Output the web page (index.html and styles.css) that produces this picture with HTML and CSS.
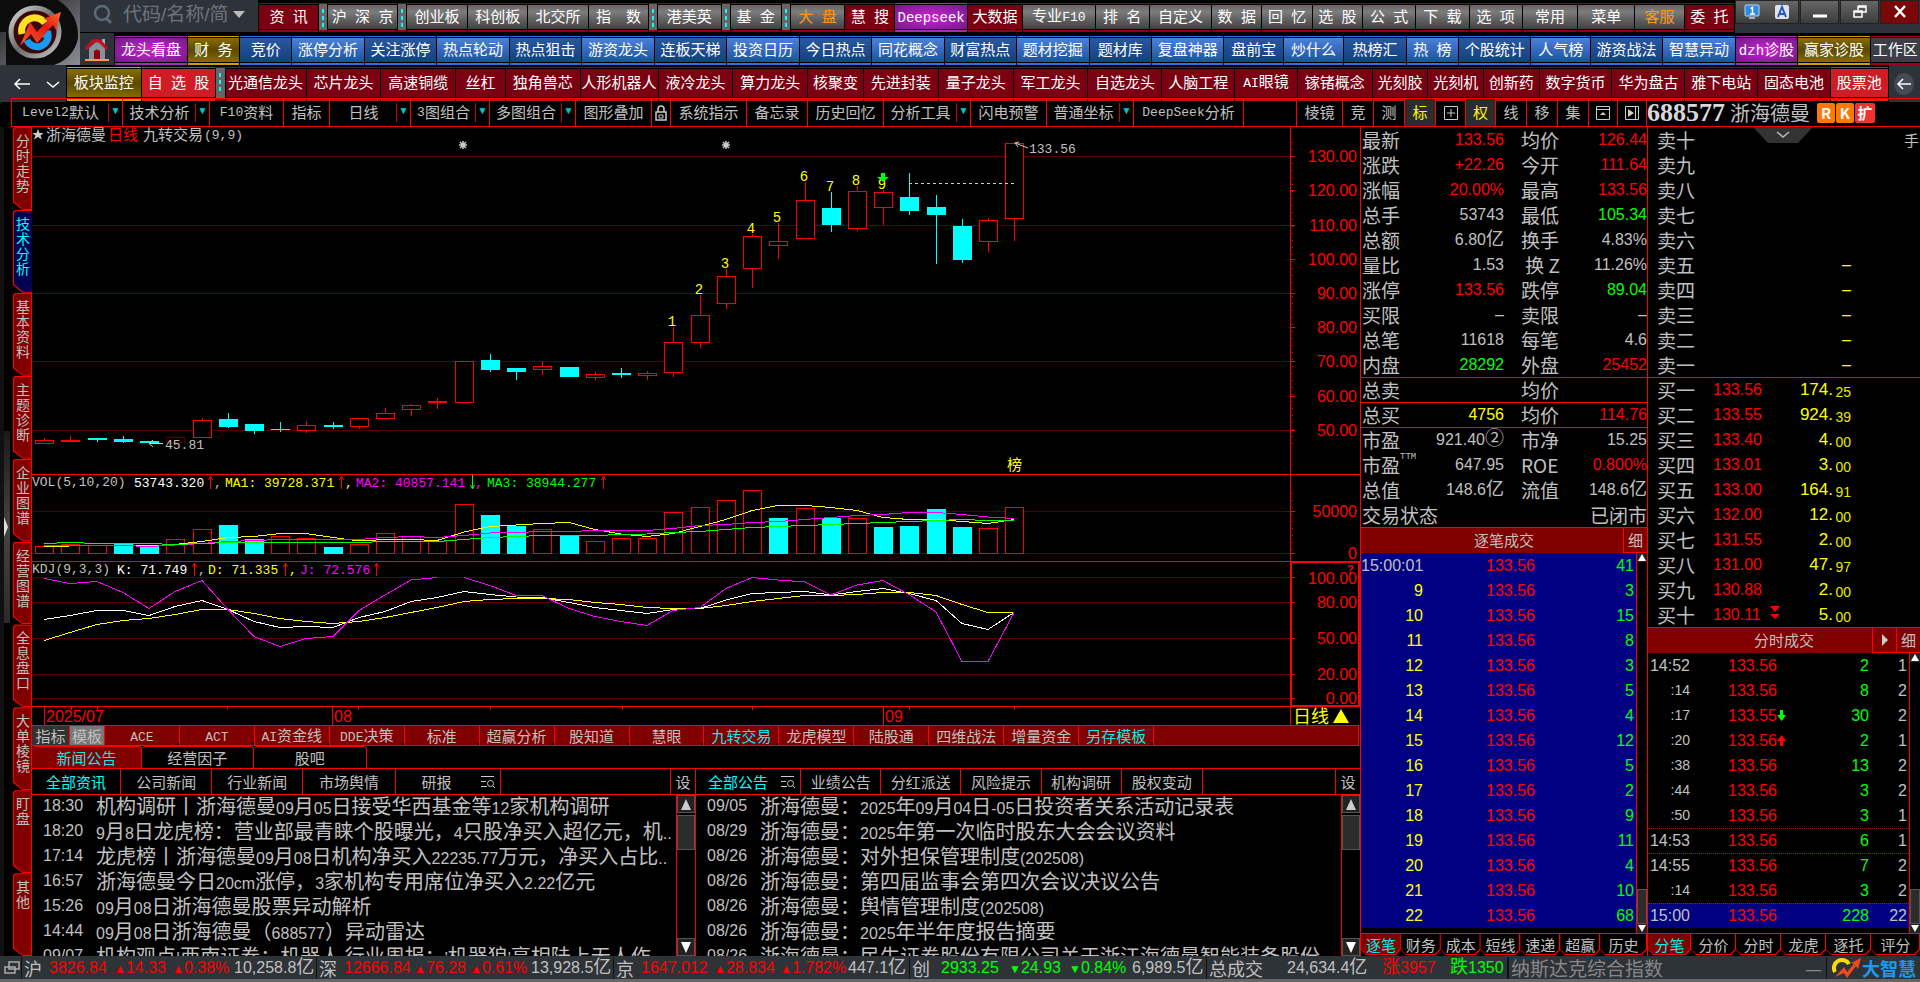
FILE: index.html
```html
<!DOCTYPE html>
<html lang="zh-CN">
<head>
<meta charset="utf-8">
<title>浙海德曼 688577</title>
<link rel="stylesheet" href="styles.css">
</head>
<body>
<header class="top">
  <div class="logo">
    <svg viewBox="0 0 80 65" width="80" height="65" aria-label="logo">
      <defs>
        <linearGradient id="ring" x1="0" y1="0" x2="1" y2="1"><stop offset="0" stop-color="#d8d8d8"/><stop offset=".5" stop-color="#6a6a6a"/><stop offset="1" stop-color="#c4c4c4"/></linearGradient>
        <linearGradient id="corner" x1="0" y1="0" x2="1" y2="1"><stop offset="0" stop-color="#1c1c1c"/><stop offset="1" stop-color="#8a8d94"/></linearGradient>
        <linearGradient id="bolt" x1="0" y1="1" x2="1" y2="0"><stop offset="0" stop-color="#ff5a30"/><stop offset=".6" stop-color="#e01c10"/><stop offset="1" stop-color="#ff6a30"/></linearGradient>
      </defs>
      <rect width="80" height="65" fill="url(#corner)"/>
      <path d="M0 0H58Q79 14 78 38Q74 58 54 65H6V32H0Z" fill="#0c0c0c"/>
      <circle cx="35" cy="32" r="24" fill="#3a0808" stroke="url(#ring)" stroke-width="5"/>
      <path d="M22 34A13 13 0 0 1 45 23" fill="none" stroke="#ffe020" stroke-width="7"/>
      <path d="M27 40A11 11 0 0 0 48 34H40" fill="none" stroke="#1a9af0" stroke-width="7"/>
      <path d="M20 46L30 22L37 32L48 20L43 19L61 12L56 30L53 25L37 43L31 34Z" fill="url(#bolt)"/>
    </svg>
  </div>
  <div class="row row1">
    <label class="search">
      <svg viewBox="0 0 20 20" width="20" height="20"><circle cx="9" cy="8" r="7" fill="none" stroke="#5b6b7c" stroke-width="2.500"/><path d="M13 13L18 18" stroke="#5b6b7c" stroke-width="3"/></svg>
      <input type="text" placeholder="代码/名称/简" aria-label="代码/名称/简">
      <span class="caret"></span>
    </label>
    <nav class="btns nav1">
      <button class="b wine">资  讯</button><i class="grip"></i>
      <button class="b gray">沪  深  京</button><i class="grip"></i>
      <button class="b gray">创业板</button><button class="b gray">科创板</button><button class="b gray">北交所</button><button class="b gray">指　数</button><i class="grip"></i>
      <button class="b gray">港美英</button><i class="grip"></i>
      <button class="b gray">基  金</button><i class="grip"></i>
      <button class="b gray orange">大  盘</button><button class="b wine">慧  搜</button><button class="b purple"><span class="m">Deepseek</span></button><button class="b wine">大数据</button>
      <button class="b gray">专业<span class="m">F10</span></button><button class="b gray">排  名</button><button class="b gray">自定义</button><button class="b gray">数  据</button><button class="b gray">回  忆</button><button class="b gray">选  股</button><button class="b gray">公  式</button><button class="b gray">下  载</button><button class="b gray">选  项</button><button class="b gray">常用</button><button class="b gray">菜单</button><button class="b gray orange">客服</button><button class="b wine">委  托</button>
    </nav>
    <div class="win">
      <span class="w wide">
        <svg viewBox="0 0 16 16" width="16" height="16"><rect x="1" y="1" width="14" height="11" rx="1" fill="#2b8be0" stroke="#b8d8f4"/><path d="M6.500 4.500L8.500 3.500V10M6 10H11" fill="none" stroke="#fff" stroke-width="1.500"/><rect x="5" y="13" width="6" height="2" fill="#aac"/></svg>
        <svg viewBox="0 0 16 16" width="16" height="16"><rect x="1" y="1" width="14" height="14" rx="2" fill="#dde3ea"/><path d="M4 13L8 3L12 13M5 10H11" fill="none" stroke="#2458c0" stroke-width="2"/></svg>
      </span>
      <button class="w" aria-label="最小化"><svg viewBox="0 0 16 16" width="16" height="16"><path d="M1 12H15" stroke="#fff" stroke-width="3"/></svg></button>
      <button class="w" aria-label="还原"><svg viewBox="0 0 16 16" width="16" height="16"><path d="M6 2H14V8H10M6 2V6M6 3H14M2 7H10V13H2ZM2 8H10" fill="none" stroke="#fff" stroke-width="1.500"/></svg></button>
      <button class="w close" aria-label="关闭"><svg viewBox="0 0 16 16" width="16" height="16"><path d="M3 2L13 13M13 2L3 13" stroke="#fff" stroke-width="2.500"/></svg></button>
    </div>
  </div>
  <nav class="row btns nav2">
    <button class="home" aria-label="首页"><svg viewBox="0 0 24 24" width="24" height="24"><path d="M4 11L12 4L20 11V22H4Z" fill="#8a9098"/><path d="M17 2H20V8L17 6Z" fill="#aab0b8"/><path d="M1 12L8 4H15L22 12" fill="none" stroke="#c81020" stroke-width="3"/><path d="M9 22V14Q12 11 15 14V22Z" fill="#900010"/><path d="M0 22H24V24H0Z" fill="#ff9a50"/></svg></button>
    <button class="b purple">龙头看盘</button><button class="b gold">财  务</button><button class="b navy">竞价</button><button class="b blue">涨停分析</button><button class="b navy">关注涨停</button><button class="b blue">热点轮动</button><button class="b navy">热点狙击</button><button class="b blue">游资龙头</button><button class="b navy">连板天梯</button><button class="b blue">投资日历</button><button class="b navy">今日热点</button><button class="b blue">同花概念</button><button class="b navy">财富热点</button><button class="b blue">题材挖掘</button><button class="b navy">题材库</button><button class="b blue">复盘神器</button><button class="b navy">盘前宝</button><button class="b blue">炒什么</button><button class="b navy">热榜汇</button><button class="b blue">热  榜</button><button class="b navy">个股统计</button><button class="b blue">人气榜</button><button class="b navy">游资战法</button><button class="b blue">智慧异动</button><button class="b purple"><span class="m">dzh</span>诊股</button><button class="b gold">赢家诊股</button><button class="b slate">工作区</button>
  </nav>
  <nav class="row btns nav3">
    <span class="arrows"><svg viewBox="0 0 65 32" width="65" height="32"><path d="M30 19H15M20 14L15 19L20 24" fill="none" stroke="#fff" stroke-width="1.500"/><path d="M47 17L53 22L59 17" fill="none" stroke="#fff" stroke-width="1.500"/></svg></span>
    <button class="b gold">板块监控</button><button class="b red">自  选  股</button><i class="grip"></i>
    <button class="b wine">光通信龙头</button><button class="b wine">芯片龙头</button><button class="b wine">高速铜缆</button><button class="b wine">丝杠</button><button class="b wine">独角兽芯</button><button class="b wine">人形机器人</button><button class="b wine">液冷龙头</button><button class="b wine">算力龙头</button><button class="b wine">核聚变</button><button class="b wine">先进封装</button><button class="b wine">量子龙头</button><button class="b wine">军工龙头</button><button class="b wine">自选龙头</button><button class="b wine">人脑工程</button><button class="b wine"><span class="m">AI</span>眼镜</button><button class="b wine">镓锗概念</button><button class="b wine">光刻胶</button><button class="b wine">光刻机</button><button class="b wine">创新药</button><button class="b wine">数字货币</button><button class="b wine">华为盘古</button><button class="b wine">雅下电站</button><button class="b wine">固态电池</button><button class="b red">股票池</button>
    <button class="back" aria-label="返回"><svg viewBox="0 0 20 24" width="20" height="24"><ellipse cx="10" cy="12" rx="10" ry="11" fill="#454b54"/><path d="M17 12H4M9 7L4 12L9 17" fill="none" stroke="#fff" stroke-width="1.500"/></svg></button>
  </nav>
</header>

<div class="tools">
  <button class="dd"><span class="m">Level2</span>默认</button><button class="dd">技术分析</button><button><span class="m">F10</span>资料</button><button>指标</button><button class="dd">日线</button><button class="dd"><span class="m">3</span>图组合</button><button class="dd">多图组合</button><button>图形叠加</button>
  <button aria-label="锁定"><svg viewBox="0 0 14 16" width="14" height="16"><path d="M4 7V4Q4 1 7 1Q10 1 10 4V7" fill="none" stroke="#ccc" stroke-width="1.500"/><rect x="2" y="7" width="10" height="8" fill="none" stroke="#ccc" stroke-width="1.500"/><path d="M5 10H9V13H5Z" stroke="#ccc" fill="none"/></svg></button>
  <button>系统指示</button><button>备忘录</button><button>历史回忆</button><button class="dd">分析工具</button><button>闪电预警</button><button class="dd">普通坐标</button><button><span class="m">DeepSeek</span>分析</button><span></span>
  <button>棱镜</button><button>竞</button><button>测</button><button class="on">标</button><button aria-label="网格"><svg viewBox="0 0 14 14" width="14" height="14"><path d="M.5.5H13.500V13.500H.5ZM3 7H11M7 3V11" fill="none" stroke="#ccc"/></svg></button><button class="on">权</button><button>线</button><button>移</button><button>集</button>
  <button aria-label="弹出"><svg viewBox="0 0 14 14" width="14" height="14"><path d="M.5.5H13.500V13.500H.5ZM.5 3.500H13.500" fill="none" stroke="#ccc"/><path d="M4 9L7 6L10 9Z" fill="#ccc"/></svg></button>
  <button aria-label="下一个"><svg viewBox="0 0 14 14" width="14" height="14"><path d="M.5.5H13.500V13.500H.5ZM10.500 .5V13.500" fill="none" stroke="#ccc"/><path d="M3 3L9 7L3 11Z" fill="#ccc"/></svg></button>
  <h1 class="stock"><b>688577</b><span>浙海德曼</span><em>R</em><em>K</em><em class="kuo">扩</em></h1>
</div>

<main class="main">
  <aside class="side">
    <div class="rail"><span class="handle"></span></div>
    <nav class="vtabs">
      <button>分时走势</button><button class="on">技术分析</button><button>基本资料</button><button>主题诊断</button><button>企业图谱</button><button>经营图谱</button><button>全息盘口</button><button>大单棱镜</button><button>盯盘</button><button>其他</button>
    </nav>
  </aside>

  <section class="center">
    <svg id="chart" class="chart" viewBox="32 127 1328 598" role="img" aria-label="日线 K线图">
      <g class="grid">
        <path d="M32 156.500H1290M32 225.500H1290M32 293.500H1290M32 361.500H1290M32 430.500H1290M32 511.500H1290M32 553.500H1290M32 577.500H1290M32 602.500H1290M32 638.500H1290M32 674.500H1290M32 698.500H1290"/>
      </g>
      <g id="plot"></g>
      <g class="frame">
        <path d="M32 474.500H1360M32 561.500H1360M32 706.500H1360M1290.500 127V726"/>
        <rect x="1291" y="562" width="68" height="144"/>
        <path d="M44.500 706V726M71.500 706V710M97.500 706V710M227.500 706V710M332.500 706V726M358.500 706V710M490.500 706V710M622.500 706V710M752.500 706V710M883.500 706V726M909.500 706V710M1014.500 706V710"/>
        <path stroke-dasharray="1 6" d="M1292.500 142V446M1292.500 493V554"/>
        <path d="M1291 156.500h4M1291 190.500h4M1291 225.500h4M1291 259.500h4M1291 293.500h4M1291 327.500h4M1291 361.500h4M1291 396.500h4M1291 430.500h4M1291 511.500h4M1291 553.500h4M1291 577.500h4M1291 602.500h4M1291 638.500h4M1291 674.500h4M1291 698.500h4"/>
      </g>
      <g class="axis">
        <text x="1357" y="162">130.00</text><text x="1357" y="196">120.00</text><text x="1357" y="231">110.00</text><text x="1357" y="265">100.00</text><text x="1357" y="299">90.00</text><text x="1357" y="333">80.00</text><text x="1357" y="367">70.00</text><text x="1357" y="402">60.00</text><text x="1357" y="436">50.00</text>
        <text x="1357" y="517">50000</text><text x="1357" y="559">0</text>
        <text x="1357" y="584">100.00</text><text x="1357" y="608">80.00</text><text x="1357" y="644">50.00</text><text x="1357" y="680">20.00</text><text x="1357" y="704">0.00</text>
      </g>
      <text class="help" x="1347" y="573">?</text>
      <g class="dates"><text x="46" y="722">2025/07</text><text x="334" y="722">08</text><text x="885" y="722">09</text></g>
      <text class="period" x="1293" y="723">日线</text><path d="M1333 723L1341 709L1349 723Z" fill="#ff0"/>
      <g class="cap">
        <text x="46" y="140">浙海德曼</text><text class="r" x="108" y="140">日线</text><text x="143" y="140">九转交易</text><text class="m" x="204" y="139">(9,9)</text>
        <path fill="#ccc" d="M38 129l1.500 4h4l-3 2.500 1.500 4-4-2.500-4 2.500 1.500-4-3-2.500h4z"/>
        <g class="m">
          <text x="32" y="486">VOL(5,10,20)</text><text class="w" x="134" y="487">53743.320</text><text x="214" y="487">,</text><text class="y" x="225" y="487">MA1: 39728.371</text><text class="y" x="345" y="487">,</text><text class="p" x="356" y="487">MA2: 40857.141</text><text class="p" x="475" y="487">,</text><text class="g" x="487" y="487">MA3: 38944.277</text>
          <text x="32" y="573">KDJ(9,3,3)</text><text class="w" x="117" y="574">K: 71.749</text><text x="198" y="574">,</text><text class="y" x="208" y="574">D: 71.335</text><text class="y" x="289" y="574">,</text><text class="p" x="300" y="574">J: 72.576</text>
          <text x="165" y="449">45.81</text><text x="1029" y="153">133.56</text>
        </g>
        <path class="up" d="M210.500 489V477M208.500 480L210.500 476L212.500 480M341.500 489V477M339.500 480L341.500 476L343.500 480M603.500 489V477M601.500 480L603.500 476L605.500 480M194.500 576V564M192.500 567L194.500 563L196.500 567M285.500 576V564M283.500 567L285.500 563L287.500 567M376.500 576V564M374.500 567L376.500 563L378.500 567"/>
        <path class="down" d="M472.500 475V488M470.500 485L472.500 489L474.500 485"/>
        <path class="ptr" d="M163 443.500H149M153 440L149 443.500L153 447M1028 148L1015 143M1019 142L1015 143L1018 147"/>
        <text class="y" x="1007" y="470">榜</text>
      </g>
    </svg>
    <nav class="tmpl">
      <button class="dark">指标</button><button class="lite">模板</button><button><span class="m">ACE</span></button><button><span class="m">ACT</span></button><button><span class="m">AI</span>资金线</button><button><span class="m">DDE</span>决策</button><button>标准</button><button>超赢分析</button><button>股知道</button><button>慧眼</button><button class="cy">九转交易</button><button>龙虎模型</button><button>陆股通</button><button>四维战法</button><button>增量资金</button><button class="cy">另存模板</button>
    </nav>
    <nav class="ntabs"><button class="on">新闻公告</button><button>经营因子</button><button>股吧</button></nav>
    <div class="news">
      <section class="pane left">
        <nav class="sub"><button class="cy">全部资讯</button><button>公司新闻</button><button>行业新闻</button><button>市场舆情</button><button class="lst">研报<svg viewBox="0 0 14 14" width="14" height="14"><path d="M0 1.500H13M0 6.500H5M0 11.500H6M12 11L14 13" stroke="#ccc" fill="none"/><circle cx="9.500" cy="8.500" r="3" fill="none" stroke="#ccc"/></svg></button><span></span><button class="set">设</button></nav>
        <div class="body">
          <ul>
            <li><time>18:30</time><a href="#">机构调研丨浙海德曼<i>09</i>月<i>05</i>日接受华西基金等<i>12</i>家机构调研</a></li>
            <li><time>18:20</time><a href="#"><i>9</i>月<i>8</i>日龙虎榜：营业部最青睐个股曝光，<i>4</i>只股净买入超亿元，机<i>..</i></a></li>
            <li><time>17:14</time><a href="#">龙虎榜丨浙海德曼<i>09</i>月<i>08</i>日机构净买入<i>22235.77</i>万元，净买入占比<i>..</i></a></li>
            <li><time>16:57</time><a href="#">浙海德曼今日<i>20cm</i>涨停，<i>3</i>家机构专用席位净买入<i>2.22</i>亿元</a></li>
            <li><time>15:26</time><a href="#"><i>09</i>月<i>08</i>日浙海德曼股票异动解析</a></li>
            <li><time>14:44</time><a href="#"><i>09</i>月<i>08</i>日浙海德曼（<i>688577</i>）异动雷达</a></li>
            <li><time>09/07</time><a href="#">机构观点<i>|</i>西南证券：机器人 行业周报：<i>'</i>机器狼<i>'</i>亮相陆上无人作</a></li>
          </ul>
          <div class="sbar"><button class="au" aria-label="上"></button><span class="thumb"></span><button class="ad" aria-label="下"></button></div>
        </div>
      </section>
      <section class="pane right">
        <nav class="sub"><button class="cy lst">全部公告<svg viewBox="0 0 14 14" width="14" height="14"><path d="M0 1.500H13M0 6.500H5M0 11.500H6M12 11L14 13" stroke="#ccc" fill="none"/><circle cx="9.500" cy="8.500" r="3" fill="none" stroke="#ccc"/></svg></button><button>业绩公告</button><button>分红派送</button><button>风险提示</button><button>机构调研</button><button>股权变动</button><span></span><button class="set">设</button></nav>
        <div class="body">
          <ul>
            <li><time>09/05</time><a href="#">浙海德曼：<i>2025</i>年<i>09</i>月<i>04</i>日<i>-05</i>日投资者关系活动记录表</a></li>
            <li><time>08/29</time><a href="#">浙海德曼：<i>2025</i>年第一次临时股东大会会议资料</a></li>
            <li><time>08/26</time><a href="#">浙海德曼：对外担保管理制度<i>(202508)</i></a></li>
            <li><time>08/26</time><a href="#">浙海德曼：第四届监事会第四次会议决议公告</a></li>
            <li><time>08/26</time><a href="#">浙海德曼：舆情管理制度<i>(202508)</i></a></li>
            <li><time>08/26</time><a href="#">浙海德曼：<i>2025</i>年半年度报告摘要</a></li>
            <li><time>08/26</time><a href="#">浙海德曼：民生证券股份有限公司关于浙江海德曼智能装备股份</a></li>
          </ul>
          <div class="sbar"><button class="au" aria-label="上"></button><span class="thumb"></span><button class="ad" aria-label="下"></button></div>
        </div>
      </section>
    </div>
  </section>

  <section class="quote">
    <table class="kv">
      <tr><th>最新</th><td class="r">133.56</td><th>均价</th><td class="r">126.44</td></tr>
      <tr><th>涨跌</th><td class="r">+22.26</td><th>今开</th><td class="r">111.64</td></tr>
      <tr><th>涨幅</th><td class="r">20.00%</td><th>最高</th><td class="r">133.56</td></tr>
      <tr><th>总手</th><td>53743</td><th>最低</th><td class="g">105.34</td></tr>
      <tr><th>总额</th><td>6.80<u>亿</u></td><th>换手</th><td>4.83%</td></tr>
      <tr><th>量比</th><td>1.53</th><th>&nbsp;换 Z</th><td>11.26%</td></tr>
      <tr><th>涨停</th><td class="r">133.56</td><th>跌停</th><td class="g">89.04</td></tr>
      <tr><th>买限</th><td>–</td><th>卖限</th><td>–</td></tr>
      <tr><th>总笔</th><td>11618</td><th>每笔</th><td>4.6</td></tr>
      <tr><th>内盘</th><td class="g">28292</td><th>外盘</th><td class="r">25452</td></tr>
      <tr class="ln"><th>总卖</th><td></td><th>均价</th><td></td></tr>
      <tr class="ln"><th>总买</th><td class="y">4756</td><th>均价</th><td class="r">114.76</td></tr>
      <tr class="ln"><th>市盈</th><td>921.40<u class="big">②</u></td><th>市净</th><td>15.25</td></tr>
      <tr><th>市盈<sup>TTM</sup></th><td>647.95</td><th>ROE</th><td class="r">0.800%</td></tr>
      <tr><th>总值</th><td>148.6<u>亿</u></td><th>流值</th><td>148.6<u>亿</u></td></tr>
      <tr><th colspan="2">交易状态</th><td colspan="2" class="state">已闭市</td></tr>
    </table>
    <div class="bar one"><span>逐笔成交</span><button>细</button></div>
    <div class="ticks blueb">
      <table>
        <tr><td class="s">15:00:01</td><td class="r">133.56</td><td class="g">41</td></tr>
        <tr><td>9</td><td class="r">133.56</td><td class="g">3</td></tr>
        <tr><td>10</td><td class="r">133.56</td><td class="g">15</td></tr>
        <tr><td>11</td><td class="r">133.56</td><td class="g">8</td></tr>
        <tr><td>12</td><td class="r">133.56</td><td class="g">3</td></tr>
        <tr><td>13</td><td class="r">133.56</td><td class="g">5</td></tr>
        <tr><td>14</td><td class="r">133.56</td><td class="g">4</td></tr>
        <tr><td>15</td><td class="r">133.56</td><td class="g">12</td></tr>
        <tr><td>16</td><td class="r">133.56</td><td class="g">5</td></tr>
        <tr><td>17</td><td class="r">133.56</td><td class="g">2</td></tr>
        <tr><td>18</td><td class="r">133.56</td><td class="g">9</td></tr>
        <tr><td>19</td><td class="r">133.56</td><td class="g">11</td></tr>
        <tr><td>20</td><td class="r">133.56</td><td class="g">4</td></tr>
        <tr><td>21</td><td class="r">133.56</td><td class="g">10</td></tr>
        <tr><td>22</td><td class="r">133.56</td><td class="g">68</td></tr>
      </table>
      <div class="sbar thin low"><button class="au" aria-label="上"></button><span class="thumb"></span><button class="ad" aria-label="下"></button></div>
    </div>
    <nav class="btabs t7"><button class="on">逐笔</button><button>财务</button><button>成本</button><button>短线</button><button>速递</button><button>超赢</button><button>历史</button></nav>
  </section>

  <section class="depth">
    <button class="drop" aria-label="展开"><svg viewBox="0 0 60 16" width="60" height="16"><path d="M0 0H60L45 16H15Z" fill="#333"/><path d="M24 5L30 10L36 5" fill="none" stroke="#bbb" stroke-width="1.500"/></svg></button>
    <table class="lv">
      <tr><th>卖十</th><td></td><td></td><td class="hand">手</td></tr>
      <tr><th>卖九</th><td></td><td></td><td></td></tr>
      <tr><th>卖八</th><td></td><td></td><td></td></tr>
      <tr><th>卖七</th><td></td><td></td><td></td></tr>
      <tr><th>卖六</th><td></td><td></td><td></td></tr>
      <tr><th>卖五</th><td></td><td></td><td class="y">–</td></tr>
      <tr><th>卖四</th><td></td><td></td><td class="y">–</td></tr>
      <tr><th>卖三</th><td></td><td></td><td class="y">–</td></tr>
      <tr><th>卖二</th><td></td><td></td><td class="y">–</td></tr>
      <tr><th>卖一</th><td></td><td></td><td class="y">–</td></tr>
      <tr class="ln"><th>买一</th><td class="r">133.56</td><td class="v">174.</td><td class="d">25</td></tr>
      <tr><th>买二</th><td class="r">133.55</td><td class="v">924.</td><td class="d">39</td></tr>
      <tr><th>买三</th><td class="r">133.40</td><td class="v">4.</td><td class="d">00</td></tr>
      <tr><th>买四</th><td class="r">133.01</td><td class="v">3.</td><td class="d">00</td></tr>
      <tr><th>买五</th><td class="r">133.00</td><td class="v">164.</td><td class="d">91</td></tr>
      <tr><th>买六</th><td class="r">132.00</td><td class="v">12.</td><td class="d">00</td></tr>
      <tr><th>买七</th><td class="r">131.55</td><td class="v">2.</td><td class="d">00</td></tr>
      <tr><th>买八</th><td class="r">131.00</td><td class="v">47.</td><td class="d">97</td></tr>
      <tr><th>买九</th><td class="r">130.88</td><td class="v">2.</td><td class="d">00</td></tr>
      <tr><th>买十</th><td class="r">130.11&nbsp; <svg viewBox="0 0 10 14" width="10" height="14"><path d="M0 0H10L5 6ZM0 8H10L5 13Z" fill="#f00"/></svg></td><td class="v">5.</td><td class="d">00</td></tr>
    </table>
    <div class="bar two"><span>分时成交</span><button aria-label="播放"><svg viewBox="0 0 8 12" width="8" height="12"><path d="M1 0L7 6L1 12Z" fill="#ccc"/></svg></button><button>细</button></div>
    <div class="ticks">
      <table class="four">
        <tr><td class="s">14:52</td><td class="r">133.56</td><td class="g">2</td><td>1</td></tr>
        <tr><td class="q">:14</td><td class="r">133.56</td><td class="g">8</td><td>2</td></tr>
        <tr><td class="q">:17</td><td class="r">133.55<svg viewBox="0 0 9 11" width="9" height="11"><path d="M3 0H6V5H9L4.500 11L0 5H3Z" fill="#0f0"/></svg></td><td class="g">30</td><td>2</td></tr>
        <tr><td class="q">:20</td><td class="r">133.56<svg viewBox="0 0 9 11" width="9" height="11"><path d="M3 11H6V6H9L4.500 0L0 6H3Z" fill="#f00"/></svg></td><td class="g">2</td><td>1</td></tr>
        <tr><td class="q">:38</td><td class="r">133.56</td><td class="g">13</td><td>2</td></tr>
        <tr><td class="q">:44</td><td class="r">133.56</td><td class="g">3</td><td>2</td></tr>
        <tr><td class="q">:50</td><td class="r">133.56</td><td class="g">3</td><td>1</td></tr>
        <tr class="dot"><td class="s">14:53</td><td class="r">133.56</td><td class="g">6</td><td>1</td></tr>
        <tr class="dot"><td class="s">14:55</td><td class="r">133.56</td><td class="g">7</td><td>2</td></tr>
        <tr><td class="q">:14</td><td class="r">133.56</td><td class="g">3</td><td>2</td></tr>
        <tr class="dot sel"><td class="s">15:00</td><td class="r">133.56</td><td class="g">228</td><td>22</td></tr>
      </table>
      <div class="sbar thin low"><button class="au" aria-label="上"></button><span class="thumb"></span><button class="ad" aria-label="下"></button></div>
    </div>
    <nav class="btabs t6"><button class="on">分笔</button><button>分价</button><button>分时</button><button>龙虎</button><button>逐托</button><button>评分</button></nav>
  </section>
</main>

<footer class="status">
  <span class="ic"><svg viewBox="0 0 16 14" width="16" height="14"><path d="M5 1H15V8H5ZM1 6H11V12H1Z" fill="#2e3338" stroke="#aaa" stroke-width="1.500"/></svg></span>
  <span class="k">沪</span><span class="r">3826.84</span><span class="r"><s>▲</s>14.33</span><span class="r"><s>▲</s>0.38%</span><span>10,258.8<u>亿</u></span>
  <span class="k">深</span><span class="r">12666.84</span><span class="r"><s>▲</s>76.28</span><span class="r"><s>▲</s>0.61%</span><span>13,928.5<u>亿</u></span>
  <span class="k">京</span><span class="r">1647.012</span><span class="r"><s>▲</s>28.834</span><span class="r"><s>▲</s>1.782%</span><span>447.1<u>亿</u></span>
  <span class="k">创</span><span class="g">2933.25</span><span class="g"><s>▼</s>24.93</span><span class="g"><s>▼</s>0.84%</span><span>6,989.5<u>亿</u></span>
  <span class="k">总成交</span><span>24,634.4<u>亿</u></span><span class="r"><u>涨</u>3957</span><span class="g"><u>跌</u>1350</span>
  <span class="nas">纳斯达克综合指数<i>—</i></span>
  <span class="brand"><svg viewBox="0 0 30 22" width="30" height="22"><path d="M3 15A8 8 0 0 1 17 7" fill="none" stroke="#ffd800" stroke-width="4"/><path d="M3 20L12 10L15 15L22 7L19 6L29 1L26 12L24 9L15 21L12 16Z" fill="#f04a1c"/></svg>大智慧</span>
</footer>
<script src="chart.js"></script>
</body>
</html>
```

FILE: styles.css
```css
:root {
  --line: #f00;
  --text: #c0c0c0;
  --maroon: #800000;
  --cjk: "Noto Sans CJK SC", sans-serif;
  --num: "Liberation Sans", "Noto Sans CJK SC", sans-serif;
  --mono: "Liberation Mono", "Noto Sans CJK SC", monospace;
}
* { box-sizing: border-box; }
body {
  margin: 0;
  height: 100vh;
  display: flex;
  flex-direction: column;
  overflow: hidden;
  background: #000;
  color: var(--text);
  font: 15px/20px "Liberation Sans", "Noto Sans CJK SC", sans-serif;
}
button {
  margin: 0; padding: 0; border: 0;
  background: none; color: inherit; font: inherit;
  white-space: pre; overflow: hidden;
}
table { border-collapse: collapse; width: 100%; table-layout: fixed; }
td, th { padding: 0; font-weight: 400; }
svg { flex: none; }
u, s { text-decoration: none; font-size: 18px; }
s { font-size: 12px; line-height: 16px; }
u.big { font-size: 19px; }
.m { font-family: var(--mono); font-size: 13px; }
.r { color: #f00; } .g { color: #0f0; } .y { color: #ff0; } .cy { color: #0ff; }

/* header */
.top { display: grid; grid-template-columns: 80px minmax(0, 1fr); grid-template-rows: 33px 32px 33px; }
.logo { grid-row: 1 / 3; }
.logo svg { display: block; }
.row1 { display: flex; background: #000; }
.search {
  width: 178px; height: 32px; flex: none; display: flex; align-items: center; gap: 10px;
  padding: 0 8px 3px 13px; background: #2e3339;
}
.search input {
  width: 108px; border: 0; padding: 0; outline: 0; background: none; color: #999;
  font: 19px/26px "Liberation Sans", "Noto Sans CJK SC", sans-serif;
}
.search input::placeholder { color: #6f747c; }
.caret { margin-left: -8px; border: 6px solid transparent; border-top: 7px solid #bbb; border-bottom: 0; flex: none; }
.btns { display: grid; gap: 1px; min-width: 0; }
.nav1 {
  flex: 1; padding: 3px 1px 1px;
  grid-template-columns: 59fr 8fr 68fr 8fr 60fr 59fr 59fr 59fr 8fr 62fr 8fr 50fr 8fr 53fr 49fr 71fr 54fr 71fr 53fr 61fr 49fr 49fr 49fr 52fr 52fr 52fr 54fr 56fr 48fr 49fr;
}
.nav2 {
  padding: 3px 0 0;
  grid-template-columns: 34fr 71fr 51fr 51fr 71fr 71fr 71fr 71fr 71fr 71fr 71fr 71fr 71fr 71fr 71fr 61fr 71fr 58fr 59fr 61fr 51fr 71fr 58fr 71fr 71fr 61fr 71fr 49fr;
}
.nav3 {
  grid-column: 1 / 3; padding: 2px 0 1px;
  grid-template-columns: 65fr 73fr 73fr 8fr 79fr 73fr 73fr 48fr 73fr 76fr 73fr 73fr 54fr 73fr 73fr 73fr 72fr 71fr 61fr 73fr 54fr 54fr 54fr 71fr 71fr 71fr 71fr 56fr 31fr;
}
.b {
  padding: 1px 0; border-top: 1px solid #a00018; border-bottom: 2px solid #a00018;
  background-clip: content-box; background-color: #7a0012; color: #fff; min-width: 0;
}
.nav3 .b { padding-bottom: 2px; line-height: 18px; }
.wine { border-bottom-color: #c01020; }
.nav1 .b { border-color: #900018; }
.gray { background-image: linear-gradient(#606060, #7c7c7c 30%, #3c3c3c); background-clip: content-box; }
.purple, .nav1 .purple { border-color: #a030b0; background-image: radial-gradient(#d020d0, #a020b0 45%, #701a80); background-clip: content-box; }
.gold { border-color: #d0a000; background-image: linear-gradient(#8a7000, #5c4800 50%, #8a7000); background-clip: content-box; }
.blue { border-color: #2a74e0; background-image: linear-gradient(#4c84dc, #1c4f9c); background-clip: content-box; }
.navy { border-color: #2a74e0; background-image: linear-gradient(#28599f, #153f80); background-clip: content-box; }
.red { border-color: #e02020; background-color: #d01c24; }
.slate { border-color: #a00018; background-color: #3b4048; }
.orange { color: #ff9a10; }
.purple .m { font-size: 14px; }
.grip {
  background: repeating-linear-gradient(#0ff 0 4px, #666 4px 7px) 3px 5px / 2px 18px no-repeat, #666;
  border-top: 1px solid #900018; border-bottom: 2px solid #900018;
}
.home { background: #2e3339; display: grid; place-items: center; margin: -3px 0 0; }
.arrows { background: #2e3339; margin: -2px 0 -1px; }
.back { background: #2e3339; margin: -2px 0 -1px; display: grid; place-items: center; }
.win { width: 185px; flex: none; display: flex; gap: 1px; background: #2e3339; }
.w { width: 39px; height: 24px; display: flex; align-items: center; justify-content: center; background: linear-gradient(#666, #3c3c3c); border: 1px solid #222; }
.w.wide { width: 64px; gap: 14px; }
.w.close { background: #7a0808; }

/* toolbar */
.tools {
  display: grid; height: 29px; flex: none; margin-left: 11px;
  grid-template-columns: 111fr 87fr 74fr 46fr 81fr 79fr 86fr 76fr 19fr 76fr 61fr 76fr 87fr 76fr 87fr 110fr 53fr 46fr 31fr 31fr 31fr 30fr 30fr 31fr 31fr 31fr 29fr 29fr 273fr;
  border-top: 1px solid var(--line); border-bottom: 1px solid var(--line); border-left: 1px solid var(--line);
}
.tools > button, .tools > span { border-right: 1px solid var(--line); display: flex; align-items: center; justify-content: center; min-width: 0; }
.tools .dd { position: relative; padding-right: 13px; }
.tools .dd::after {
  content: "▼"; position: absolute; right: 0; top: 4px; width: 13px; height: 19px; color: #00c8c8;
  font-size: 10px; line-height: 15px; border-left: 1px solid #c00; text-align: center;
}
.tools .on { background: #2c2c2c; color: #ff0; }
.stock { margin: 0; display: flex; align-items: center; gap: 1px; font: 20px/26px "Noto Sans CJK SC", sans-serif; }
.stock b { font: bold 26px/26px "Liberation Serif", serif; color: #d8d8d8; }
.stock span { margin: 0 6px 0 4px; }
.stock em { width: 18px; height: 20px; border-radius: 2px; background: #ff7800; color: #fff; font: bold 15px/20px "Noto Sans CJK SC", sans-serif; text-align: center; }
.stock .kuo { width: 20px; background: #f53030; }

/* main columns */
.main { flex: 1; min-height: 0; display: grid; grid-template-columns: 32px minmax(0, 1fr) 287px 273px; grid-template-rows: minmax(0, 1fr); }
.side { display: flex; min-height: 0; }
.rail { width: 13px; background: linear-gradient(90deg, #111 4px, transparent 4px); padding: 304px 0 0 4px; }
.handle { display: grid; align-items: center; width: 6px; height: 192px; background: linear-gradient(#1a1a1a, #444 50%, #2a2a2a); }
.handle::before { content: ""; border: 10px solid transparent; border-left: 4px solid #ddd; border-right: 0; width: 4px; }
.vtabs { flex: 1; display: flex; flex-direction: column; min-height: 0; }
.vtabs button {
  flex: 1; min-height: 0; position: relative; z-index: 0; background: var(--line);
  clip-path: polygon(0 2px, 2px 0, 100% 0, 100% 100%, 50% 100%, 0 91%);
  font: 14px/15px var(--cjk); white-space: normal; padding: 6px 2px 0 3px; text-align: left; word-break: break-all;
  display: flex; align-items: flex-start;
}
.vtabs button::before {
  content: ""; position: absolute; z-index: -1; inset: 1px; background: var(--maroon);
  clip-path: polygon(0 2px, 2px 0, 100% 0, 100% 100%, 50% 100%, 0 91%);
}
.vtabs .on { color: #0ff; }
.vtabs .on::before { background: #000050; right: 0; }

/* chart */
.center { display: flex; flex-direction: column; min-width: 0; min-height: 0; }
.chart { display: block; width: 100%; height: auto; }
.grid path { stroke: #500000; fill: none; }
.frame path { stroke: #f00; fill: none; }
.frame rect { stroke: #f00; stroke-width: 2px; fill: none; }
.axis text { font: 16px var(--num); fill: #f00; text-anchor: end; }
.dates text { font: 16px var(--num); fill: #f00; }
.help { font: bold 11px "Liberation Sans", sans-serif; fill: #f00; }
.period { font: 18px var(--cjk); fill: #ff0; }
.cap text { font: 15px var(--cjk); fill: var(--text); }
.cap .m text, .cap text.m { font: 13px var(--mono); }
.cap text.r { fill: #f00; } .cap text.y { fill: #ff0; } .cap text.p { fill: #f0f; } .cap text.g { fill: #0f0; } .cap text.w { fill: #fff; }
.up { stroke: #f00; fill: none; } .down { stroke: #0f0; fill: none; } .ptr { stroke: #ccc; fill: none; }
.seq { font: 14px var(--mono); fill: #ff0; text-anchor: middle; }

.tmpl {
  display: grid; flex: none; height: 21px; margin-right: 1px; background: var(--maroon);
  border: 1px solid var(--line); border-left: 0;
  grid-template-columns: 38fr 35fr repeat(14, 75fr) 204fr; font-family: var(--cjk);
}
.tmpl button { position: relative; border-right: 1px solid var(--line); line-height: 18px; min-width: 0; }
.tmpl button::after { content: ""; position: absolute; right: -1px; bottom: 0; border: 4px solid transparent; border-bottom-color: #000; border-right: 0; border-top: 0; }
.tmpl .dark { background: #333; } .tmpl .lite { background: #777; }
.tmpl .dark::after, .tmpl .lite::after { content: none; }
.tmpl .cy { color: #0ee; }
.ntabs { display: grid; flex: none; height: 22px; grid-template-columns: 110fr 112fr 113fr 993fr; margin-right: 1px; font-family: var(--cjk); }
.ntabs button { border: 1px solid var(--line); border-left: 0; border-bottom: 0; border-radius: 4px 4px 0 0; line-height: 18px; }
.ntabs .on { background: var(--maroon); color: #0ee; }
.news { flex: 1; min-height: 0; display: grid; grid-template-columns: 664fr 664fr; }
.pane { display: flex; flex-direction: column; min-height: 0; min-width: 0; border-right: 1px solid var(--line); }
.right { border-right: 0; }
.sub { display: grid; flex: none; height: 27px; border-top: 1px solid var(--line); border-bottom: 1px solid var(--line); font-family: var(--cjk); }
.left .sub { grid-template-columns: 89fr 91fr 91fr 92fr 105fr 170fr 24fr; }
.right .sub { grid-template-columns: 105fr 80fr 80fr 80fr 80fr 81fr 133fr 24fr; }
.sub > * { border-right: 1px solid var(--line); min-width: 0; padding: 0; }
.sub .set { border-right: 0; }
.lst { display: flex; align-items: center; justify-content: space-between; }
.left .sub .lst { padding: 0 5px 0 26px; }
.right .sub .lst { padding: 0 5px 0 12px; }
.body { flex: 1; min-height: 0; display: flex; }
.body ul { flex: 1; min-width: 0; margin: 0; padding: 0 0 0 11px; list-style: none; overflow: hidden; border-right: 1px solid var(--line); }
.body li { display: flex; height: 25px; gap: 13px; white-space: nowrap; font: 20px/22px var(--cjk); }
.body time { width: 40px; font: 16px/22px var(--num); }
.body i { font: 16px/20px var(--num); }
.body a { color: inherit; text-decoration: none; }
.sbar { width: 18px; flex: none; display: flex; flex-direction: column; gap: 2px; background: #000; }
.sbar button { flex: none; height: 18px; background: #222; border: 1px solid #555; display: grid; place-items: center; }
.au::before, .ad::before { content: ""; border: 5px solid transparent; }
.au::before { border-bottom: 11px solid #ccc; border-top: 0; }
.ad::before { border-top: 11px solid #fff; border-bottom: 0; }
.thumb { height: 35px; background: #2c2c2c; border: 1px solid #555; }
.sbar .ad { margin-top: auto; }
.thin { width: 11px; border-left: 1px solid var(--line); gap: 0; }
.thin button { height: 9px; border: 0; }
.thin .au::before { border-width: 0 4px 7px; border-color: transparent transparent #fff; }
.thin .ad::before { border-width: 7px 4px 0; border-color: #fff transparent transparent; }
.thin.low .thumb { margin-top: auto; }
.thin.low .ad { margin-top: 0; }

/* quote */
.quote, .depth { display: flex; flex-direction: column; min-height: 0; min-width: 0; border-left: 1px solid var(--line); }
.quote tr, .depth tr { height: 25px; }
td { font: 16px/23px var(--num); text-align: right; white-space: nowrap; }
td u { line-height: 20px; }
th { font: 19px/23px var(--cjk); text-align: left; white-space: nowrap; }
td.state { font: 19px/23px var(--cjk); }
.ln { border-top: 1px solid var(--line); }
.kv th { padding-left: 1px; }
.kv tr:first-child > :nth-child(1) { width: 60px; }
.kv tr:first-child > :nth-child(2) { width: 83px; }
.kv tr:first-child > :nth-child(3) { width: 70px; }
.kv th:nth-child(3) { padding-left: 17px; }
.kv sup { font: 9px/9px var(--mono); vertical-align: top; }
.bar { display: flex; flex: none; height: 26px; background: var(--maroon); border-top: 1px solid var(--line); font: 15px/24px var(--cjk); }
.bar span { flex: 1; text-align: center; }
.one span { padding-left: 24px; }
.two span { padding-left: 48px; }
.bar button { width: 24px; border-left: 1px solid var(--line); border-bottom: 1px solid var(--line); }
.ticks { flex: 1; min-height: 0; display: flex; }
.ticks table { flex: 1 1 0; width: 100%; min-width: 0; align-self: flex-start; }
.blueb table { background: #000080; }
.blueb td:nth-child(1) { width: 62px; color: #ff0; }
.blueb td:nth-child(2) { width: 112px; }
.ticks td.s { color: var(--text); }
.blueb td:nth-child(3) { padding-right: 2px; }
.four td:nth-child(1) { width: 42px; }
.four td:nth-child(2) { width: 110px; text-align: left; padding-left: 38px; }
.four td:nth-child(3) { width: 69px; }
.four td:nth-child(4) { padding-right: 2px; }
.four .q { font-size: 14px; }
.four .dot { border-top: 1px dotted #c00; }
.four .sel { background: #000080; }
.btabs { display: grid; flex: none; height: 23px; padding-bottom: 1px; border-top: 1px solid var(--line); font-family: var(--cjk); }
.t7 { grid-template-columns: repeat(6, 40fr) 47fr; }
.t6 { grid-template-columns: 43fr 45fr 45fr 45fr 45fr 49fr; }
.btabs button { position: relative; z-index: 0; background: var(--line); min-width: 0; clip-path: polygon(0 0, 100% 0, 100% 75%, calc(100% - 5px) 100%, 5px 100%, 0 75%); }
.btabs button::before { content: ""; position: absolute; z-index: -1; inset: 0 1px 1px 0; background: #000; clip-path: polygon(0 0, 100% 0, 100% 75%, calc(100% - 5px) 100%, 5px 100%, 0 75%); }
.btabs .on { color: #0ee; }
.btabs .on::before { background: var(--maroon); }
.depth { position: relative; }
.drop { position: absolute; top: 0; left: 105px; height: 16px; }
.drop svg { display: block; }
.lv th { padding-left: 9px; }
.lv tr:first-child > :nth-child(1) { width: 65px; }
.lv tr:first-child > :nth-child(2) { width: 74px; }
.lv tr:first-child > :nth-child(3) { width: 46px; }
.lv td:nth-child(2) { text-align: left; }
.lv td:nth-child(4) { padding-right: 69px; }
.lv td.hand { padding-right: 1px; font: 15px/20px var(--cjk); }
.lv .v { color: #ff0; font-size: 17px; }
.lv .d { color: #e8e800; font-size: 14px; line-height: 20px; vertical-align: bottom; }

/* status */
.status {
  flex: none; height: 26px; display: grid; align-items: center; background: #2e3338; border-bottom: 3px solid #666;
  white-space: nowrap; font: 16px/22px var(--num); overflow: hidden;
  grid-template-columns: 21fr 28fr 65fr 58fr 62fr 82fr 28fr 70fr 56fr 61fr 82fr 28fr 73fr 66fr 68fr 61fr 32fr 68fr 60fr 63fr 74fr 81fr 95fr 68fr 57fr 319fr 94fr;
}
.status > span { min-width: 0; }
.status .k { font: 18px/22px var(--cjk); padding: 0 2px; border-left: 1px solid #111; }
.status u { line-height: 20px; }
.ic { padding-left: 4px; display: flex; }
.status .nas { color: #888; display: flex; justify-content: space-between; border-left: 2px solid #111; padding: 0 4px 0 2px; font: 19px/22px var(--cjk); }
.nas i { font-style: normal; }
.brand { display: flex; align-items: center; color: #1a9af0; font: bold 18px/22px var(--cjk); border-left: 1px solid #111; padding: 0 0 0 5px; }
```

FILE: chart.js
```js
(function () {
  var NS = 'http://www.w3.org/2000/svg';
  var plot = document.getElementById('plot');
  var X0 = 44.2, STEP = 26.22, HALF = 9;
  function x(i) { return Math.round(X0 + i * STEP); }
  function add(tag, attrs, text) {
    var el = document.createElementNS(NS, tag);
    for (var k in attrs) el.setAttribute(k, attrs[k]);
    if (text) el.textContent = text;
    plot.appendChild(el);
  }
  // direction, body top, body bottom, high, low
  var candles = [
    ['r',440,443,438,443],['r',440,440,436,441],['c',438,440,438,442],['c',439,442,436,443],['c',441,443,441,443],['d',437,442,436,442],
    ['r',420,437,418,437],['c',419,427,413,428],['c',424,431,424,434],['c',429,430,422,432],['r',425,430,421,433],['c',425,427,422,429],
    ['r',418,426,418,429],['r',413,418,408,418],['r',405,409,404,416],['r',401,402,398,409],['r',361,402,361,402],['c',360,370,354,372],
    ['c',368,372,368,380],['r',366,369,361,375],['c',367,377,367,377],['r',374,377,372,380],['c',373,375,368,378],['r',373,375,371,380],
    ['r',342,372,327,377],['r',315,342,295,348],['r',276,303,269,309],['r',236,268,234,288],['r',241,245,223,259],['r',200,238,182,238],
    ['c',208,225,192,232],['r',191,228,186,231],['r',192,207,190,225],['c',197,211,173,215],['c',207,215,195,264],['c',226,260,219,263],
    ['r',220,241,218,252],['r',143,218,142,241]
  ];
  var colors = { r: '#f00', c: '#0ff', d: '#500000' };
  candles.forEach(function (c, i) {
    var col = colors[c[0]], cx = x(i) + 0.5;
    if (c[0] === 'c') {
      add('path', { d: 'M' + cx + ' ' + c[3] + 'V' + c[4], stroke: col });
      add('rect', { x: cx - HALF - 0.5, y: c[1], width: 19, height: c[2] - c[1], fill: col });
    } else {
      add('path', { d: 'M' + cx + ' ' + c[3] + 'V' + c[1] + 'M' + cx + ' ' + c[2] + 'V' + c[4], stroke: col });
      add('rect', { x: cx - HALF, y: c[1] + 0.5, width: 18, height: Math.max(c[2] - c[1], 1), fill: '#000', stroke: col });
    }
  });
  var vol = 'r546 r544 r545 c543 c545 r539 r529 c525 c539 r536 r538 c547 r544 r533 r536 r541 r504 c515 c526 r529 c535 r541 r538 r538 r512 r507 r500 r490 c518 r508 c518 r518 c527 c526 c509 c527 r528 r507'.split(' ');
  vol.forEach(function (v, i) {
    var top = +v.slice(1), cx = x(i);
    if (v[0] === 'c') add('rect', { x: cx - 9, y: top, width: 19, height: 554 - top, fill: '#0ff' });
    else add('rect', { x: cx - 8.5, y: top + 0.5, width: 18, height: 553 - top, fill: '#000', stroke: '#f00' });
  });
  function line(points, color, start) {
    add('polyline', {
      points: points.map(function (y, i) { return x(i + (start || 0)) + ',' + y; }).join(' '),
      fill: 'none', stroke: color, 'stroke-width': 1, 'shape-rendering': 'crispEdges'
    });
  }
  line([546.5,546,546,545.5,545.5,544.5,541.5,537.5,536.5,533.5,533.5,537.5,541,539.5,539.5,540.5,532,526.5,525,523.5,522.5,529.5,534,536.5,533.5,526.5,519.5,510.5,505.5,505.5,507.5,510.5,517.5,519.5,519.5,521.5,523.5,519.5], '#ff0');
  line([545.5,545.5,545.5,545.5,546.5,545,543.5,541.5,540.5,539.5,539.5,539.5,539.5,537.5,536.5,537.5,535.5,533,532.5,531.5,531.5,530.5,530.5,530.5,528.5,525.5,524.5,522.5,521.5,519.5,517.5,515.5,514.5,512.5,512.5,514.5,517,518.5], '#f0f');
  line([543.5,542.5,543.5,543.5,543.5,544.5,543.5,542.5,542.5,542.5,542.5,542.5,542.5,541.5,541.5,541.5,539.5,537.5,536.5,535.5,535.5,535.5,534.5,534,532.5,531.5,529.5,527.5,526.5,525.5,524.5,523.5,522.5,521.5,520.5,519.5,520.5,520.5], '#0f0');
  line([640.5,632.5,624.5,620.5,618.5,614.5,609.5,609.5,613.5,618.5,621.5,623.5,621.5,617.5,612.5,607.5,601.5,599.5,598.5,598.5,599.5,602.5,604.5,607.5,608.5,608.5,605.5,601.5,598.5,595.5,595.5,594.5,592.5,592.5,595.5,604.5,612.5,612.5], '#ff0');
  line([619.5,615.5,610.5,610.5,615.5,606.5,600.5,609.5,621.5,627.5,626.5,627.5,617.5,611.5,601.5,597.5,591.5,594.5,597,597.5,602.5,607.5,610.5,613.5,609.5,608.5,600,593.5,592.5,591.5,595,591.5,588.5,593.5,600.5,623.5,629.5,612.5], '#fff');
  line([578.5,583.5,581.5,592.5,608.5,591.5,580.5,609.5,636.5,646.5,638.5,636.5,610.5,595,580,577.5], '#f0f');
  line([577.5,585.5,595.5,595.5,608.5,616.5,621.5,625.5,610.5,607.5,588.5,577.5,580,582,595,585,580.5,594.5,612,661.5,661.5,612.5], '#f0f', 16);
  // consecutive-day counters above the candles
  [326,294,268,233,222,181,191,185,189].forEach(function (y, n) {
    add('text', { x: x(24 + n) - 1, y: y, 'class': 'seq' }, String(n + 1));
  });
  add('path', { d: 'M881 173H885V177H889L883 182L877 177H881Z', fill: '#0f0' });
  add('path', { d: 'M' + x(33) + ' 183.5H' + x(37), stroke: '#b8e0a8', 'stroke-dasharray': '3 3' });
  [463, 726].forEach(function (sx) {
    add('path', { d: 'M' + (sx - 3) + ' 142l6 6m0 -6l-6 6M' + (sx - 4) + ' 145h8M' + sx + ' 141v8', stroke: '#ccc', 'stroke-width': 1.5 });
  });
})();
```
